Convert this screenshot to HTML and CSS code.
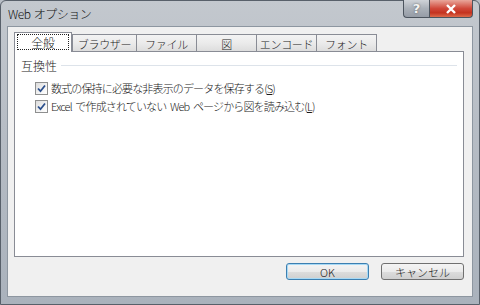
FILE: index.html
```html
<!DOCTYPE html>
<html lang="ja">
<head>
  <meta charset="utf-8" />
  <title>Web オプション</title>
  <link rel="stylesheet" href="styles.css">
</head>
<body>
  <div class="window">
    <div class="titlebar">
      <span class="title">Web オプション</span>
      <div class="caption-buttons">
        <span class="cap help">?</span>
        <span class="cap close">
          <svg width="12" height="10" viewBox="0 0 12 10"><path d="M2 1 L10 9 M10 1 L2 9" stroke="#fff" stroke-width="2.4" fill="none"/></svg>
        </span>
      </div>
    </div>

    <div class="client">
      <div class="tabs">
        <div class="tab selected"><span class="focus">全般</span></div>
        <div class="tab wide">ブラウザー</div>
        <div class="tab">ファイル</div>
        <div class="tab">図</div>
        <div class="tab">エンコード</div>
        <div class="tab">フォント</div>
      </div>

      <div class="panel">
        <div class="group">
          <span class="group-label">互換性</span>
          <span class="group-line"></span>
        </div>
        <label class="check">
          <span class="box"><svg width="11" height="11" viewBox="0 0 11 11"><path d="M2 5.5 L4.5 8.2 L9 2.5" stroke="#2b4f8c" stroke-width="1.8" fill="none"/></svg></span>
          <span class="text">数式の保持に必要な非表示のデータを保存する(<u>S</u>)</span>
        </label>
        <label class="check">
          <span class="box"><svg width="11" height="11" viewBox="0 0 11 11"><path d="M2 5.5 L4.5 8.2 L9 2.5" stroke="#2b4f8c" stroke-width="1.8" fill="none"/></svg></span>
          <span class="text">Excel で作成されていない Web ページから図を読み込む(<u>L</u>)</span>
        </label>
      </div>

      <div class="actions">
        <button class="btn default">OK</button>
        <button class="btn">キャンセル</button>
      </div>
    </div>
  </div>
</body>
</html>
```

FILE: styles.css
```css
/* — ウィンドウ枠 — */
body {
  margin: 0;
  background: #b8bec6;
  font-family: "Noto Sans CJK JP", "Noto Sans", sans-serif;
  font-size: 11px;
  font-weight: 300;
  color: #1a1a1a;
}
.window {
  width: 480px; height: 305px;
  box-sizing: border-box;
  display: flex; flex-direction: column;
  border: 1px solid #58606a;
  border-radius: 6px 6px 0 0;
  background: linear-gradient(180deg, #c3c8ce 0%, #b7bdc5 40%, #aab2bc 100%);
  padding: 0 6px 7px 6px;
}
.titlebar {
  height: 25px;
  display: flex; align-items: flex-start;
}
.title {
  font-size: 12px;
  letter-spacing: -0.5px;
  word-spacing: 1px;
  padding: 4px 0 0 1px;
  color: #111;
}
.caption-buttons {
  margin-left: auto;
  display: flex;
  margin-top: -1px;
}
.cap {
  height: 18px;
  display: flex; justify-content: center; align-items: center;
  border: 1px solid #4c545e;
  border-top: none;
  box-sizing: border-box;
}
.cap.help {
  width: 26px;
  border-radius: 0 0 0 4px;
  border-right: none;
  background: linear-gradient(180deg, #cfd3d8 0%, #aab0b8 50%, #959ca6 100%);
  color: #f4f4f4; font-weight: bold; font-size: 13px;
  font-family: "DejaVu Sans", sans-serif;
  text-shadow: 0 0 2px #555;
}
.cap.close {
  width: 44px;
  border-radius: 0 0 4px 0;
  background: linear-gradient(180deg, #e9a79b 0%, #d0483a 50%, #c4321f 75%, #dd6a4a 100%);
}

/* — クライアント領域 — */
.client {
  flex: 1;
  display: flex; flex-direction: column;
  background: #f0f0f0;
  border: 1px solid #8d96a0;
  padding: 5px 8px 16px 6px;
}
.tabs {
  display: flex; align-items: flex-end;
  height: 19px;
}
.tab {
  width: 61px; height: 17px;
  box-sizing: border-box;
  border: 1px solid #898c95;
  border-bottom: none;
  margin-left: -1px;
  background: linear-gradient(180deg, #f3f3f3 0%, #ebebeb 50%, #dddddd 100%);
  display: flex; justify-content: center; align-items: center;
  padding-top: 2px;
  letter-spacing: -0.3px;
}
.tab.wide { width: 65px; }
.tab.selected {
  width: 58px; height: 20px;
  margin: 0 0 -1px 0;
  background: #fff;
  position: relative;
  padding: 2px 2px 3px;
}
.tab.selected + .tab { margin-left: 0; }
.focus {
  flex: 1; height: 14px;
  border: 1px dotted #222;
  display: flex; justify-content: center; align-items: center;
  font-size: 12px;
}

.panel {
  flex: 1;
  background: #fff;
  border: 1px solid #898c95;
  padding: 6px 6px 0 6px;
}
.group {
  display: flex; align-items: center;
  height: 14px;
  margin-bottom: 7px;
}
.group-label { font-size: 12px; margin-right: 4px; }
.group-line { flex: 1; border-top: 1px solid #dde3ea; }

.check {
  display: flex; align-items: center;
  height: 18px;
  padding-left: 14px;
  gap: 3px;
}
.check .text { letter-spacing: -0.85px; word-spacing: 2px; }
.box {
  width: 13px; height: 13px;
  box-sizing: border-box;
  border: 1px solid #8e8f8f;
  background: linear-gradient(135deg, #dcdcdc 0%, #f4f4f4 60%, #fff 100%);
  display: flex; justify-content: center; align-items: center;
}
u { text-decoration-thickness: 1px; text-underline-offset: 1px; }

/* — ボタン — */
.actions {
  display: flex; justify-content: flex-end;
  gap: 12px;
  margin-top: 6px;
}
.btn {
  width: 83px; height: 17px;
  box-sizing: border-box;
  font-family: inherit; font-size: 11px; font-weight: 300;
  color: #1a1a1a;
  border: 1px solid #707070;
  border-radius: 3px;
  background: linear-gradient(180deg, #f4f4f4 0%, #ebebeb 50%, #dddddd 51%, #cfcfcf 100%);
  padding: 0;
  display: flex; justify-content: center; align-items: center;
}
.btn.default {
  border-color: #3c7fb1;
  box-shadow: inset 0 0 0 1px #a7d9f5;
}
```
